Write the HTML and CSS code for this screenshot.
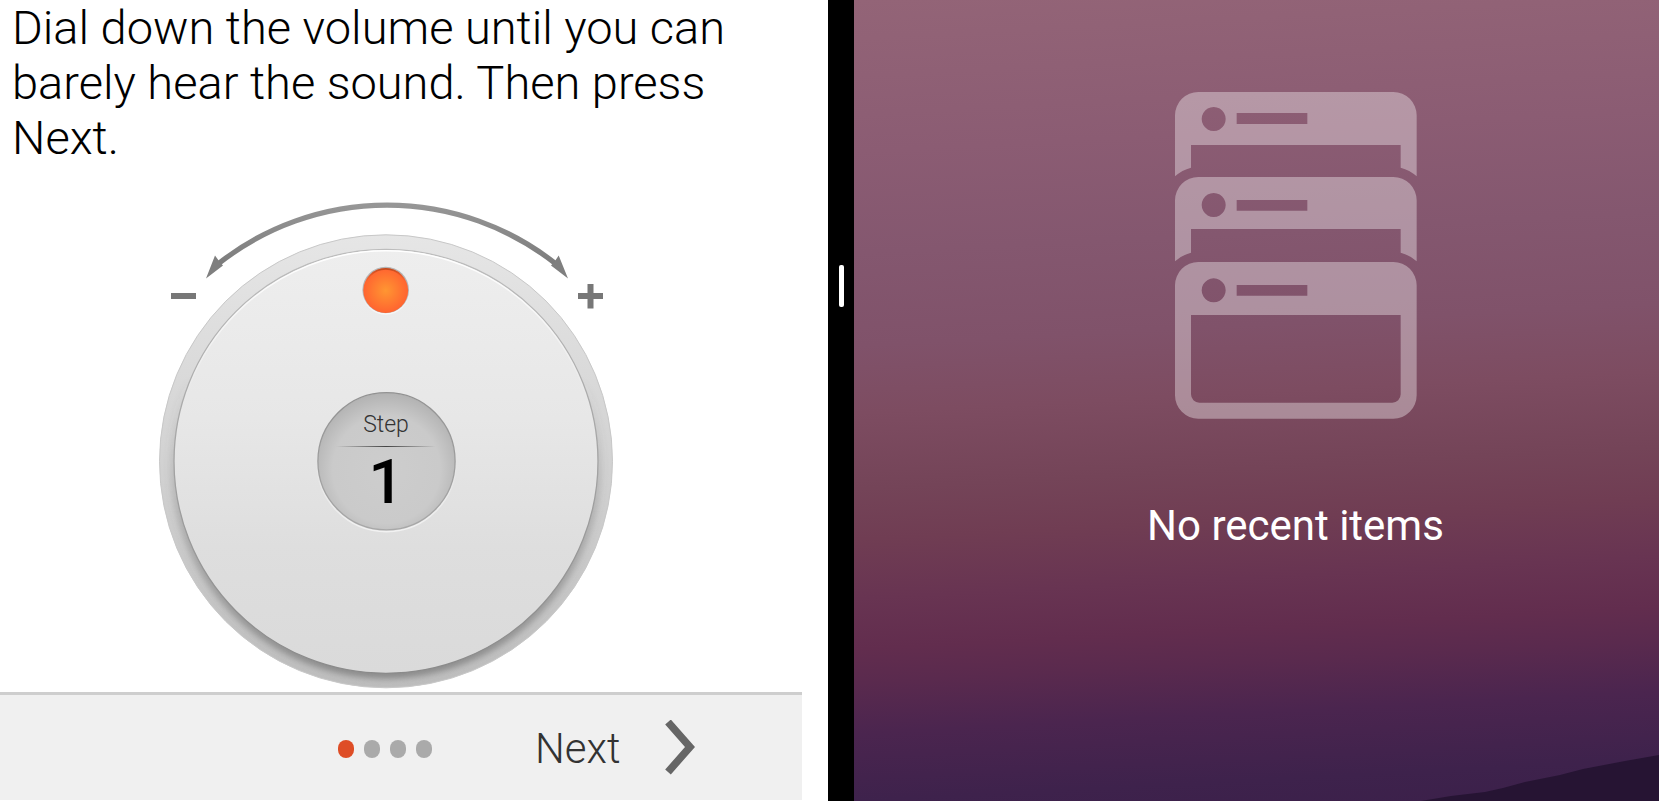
FILE: index.html
```html
<!DOCTYPE html>
<html lang="en">
<head>
<meta charset="utf-8">
<meta name="viewport" content="width=device-width, initial-scale=1">
<title>Hearing setup</title>
<link rel="stylesheet" href="styles.css">
</head>
<body>
<div class="split">
  <main class="setup">
    <p class="instructions">Dial down the volume until you can barely hear the sound. Then press Next.</p>
    <div class="stage">
      <div class="dial">
        <svg class="dial-art" viewBox="150 192 472 500" aria-hidden="true">
          <defs>
            <linearGradient id="rim" x1="0" y1="0" x2="0" y2="1">
              <stop offset="0" stop-color="#e6e6e6"/>
              <stop offset="0.5" stop-color="#d2d2d2"/>
              <stop offset="1" stop-color="#bdbdbd"/>
            </linearGradient>
            <linearGradient id="face" x1="0" y1="0" x2="0" y2="1">
              <stop offset="0" stop-color="#eeeeee"/>
              <stop offset="0.4" stop-color="#e7e7e7"/>
              <stop offset="0.7" stop-color="#dedede"/>
              <stop offset="1" stop-color="#dadada"/>
            </linearGradient>
            <linearGradient id="faceEdge" x1="0" y1="0" x2="0" y2="1">
              <stop offset="0" stop-color="#bdbdbd"/>
              <stop offset="1" stop-color="#8a8a8a"/>
            </linearGradient>
            <linearGradient id="shade" x1="0" y1="0" x2="0" y2="1">
              <stop offset="0.3" stop-color="#666" stop-opacity="0"/>
              <stop offset="1" stop-color="#666" stop-opacity="0.6"/>
            </linearGradient>
            <linearGradient id="shine" x1="0" y1="0" x2="0" y2="1">
              <stop offset="0" stop-color="#fff"/>
              <stop offset="0.35" stop-color="#fff" stop-opacity="0"/>
            </linearGradient>
            <linearGradient id="lip" x1="0" y1="0" x2="0" y2="1">
              <stop offset="0.5" stop-color="#fff" stop-opacity="0"/>
              <stop offset="1" stop-color="#fff" stop-opacity="0.6"/>
            </linearGradient>
            <linearGradient id="wellEdge" x1="0" y1="0" x2="0" y2="1">
              <stop offset="0" stop-color="#929292"/>
              <stop offset="1" stop-color="#a8a8a8"/>
            </linearGradient>
            <radialGradient id="well" cx="0.5" cy="0.56" r="0.56">
              <stop offset="0" stop-color="#cdcdcd"/>
              <stop offset="0.7" stop-color="#cacaca"/>
              <stop offset="1" stop-color="#b2b2b2"/>
            </radialGradient>
            <radialGradient id="lamp">
              <stop offset="0" stop-color="#ff9632"/>
              <stop offset="1" stop-color="#ff6430"/>
            </radialGradient>
            <linearGradient id="lampShade" x1="0" y1="0" x2="0" y2="1">
              <stop offset="0" stop-color="#a84018" stop-opacity="0.7"/>
              <stop offset="0.3" stop-color="#d04a1a" stop-opacity="0"/>
            </linearGradient>
            <linearGradient id="arrow" x1="0" y1="0" x2="0" y2="1">
              <stop offset="0" stop-color="#969696"/>
              <stop offset="1" stop-color="#7c7c7c"/>
            </linearGradient>
            <filter id="soft" x="-10%" y="-10%" width="120%" height="120%"><feGaussianBlur stdDeviation="3"/></filter>
            <clipPath id="rimClip"><circle cx="386" cy="461.300" r="227"/></clipPath>
          </defs>
          <path d="M218 264A272 272 0 0 1 556 264" fill="none" stroke="url(#arrow)" stroke-width="5.200"/>
          <path d="M206 278.500L215 255.500L219 261L223 265.500Z M568 278.500L558.700 255.500L555 261L551 265.500Z" fill="#7f7f7f"/>
          <path d="M171 293h25v6h-25z M578 293h9.500v-9h6v9h9.500v6h-9.500v9.500h-6v-9.500h-9.500z" fill="#777"/>
          <circle cx="386" cy="461.300" r="226.500" fill="url(#rim)" stroke="#c8c8c8" stroke-width="1"/>
          <circle cx="386" cy="462.500" r="211" fill="none" stroke="url(#shade)" stroke-width="10" filter="url(#soft)" clip-path="url(#rimClip)"/>
          <circle cx="386" cy="461.300" r="212" fill="url(#face)" stroke="url(#faceEdge)" stroke-width="1.300"/>
          <circle cx="386" cy="461.500" r="210.700" fill="none" stroke="url(#shine)" stroke-width="1.500"/>
          <circle cx="385.700" cy="290" r="23.300" fill="#b4b4b4"/>
          <circle cx="385.700" cy="291" r="23" fill="none" stroke="url(#lip)" stroke-width="1.500"/>
          <circle cx="385.700" cy="290.500" r="22.400" fill="url(#lamp)"/>
          <circle cx="385.700" cy="290.500" r="21.600" fill="none" stroke="url(#lampShade)" stroke-width="1.600"/>
          <circle cx="386.500" cy="462" r="69.600" fill="none" stroke="url(#lip)" stroke-width="1.600"/>
          <circle cx="386.500" cy="461.300" r="68.600" fill="url(#well)" stroke="url(#wellEdge)" stroke-width="1.300"/>
        </svg>
        <div class="readout">
          <span class="readout-label">Step</span>
          <span class="readout-rule"></span>
          <span class="readout-value">1</span>
        </div>
      </div>
    </div>
    <footer class="wizard-bar">
      <ol class="pager" aria-label="Step 1 of 4">
        <li class="dot dot-current"></li>
        <li class="dot"></li>
        <li class="dot"></li>
        <li class="dot"></li>
      </ol>
      <button class="next" type="button">
        <span class="next-label">Next</span>
        <svg class="chevron" viewBox="0 0 30 56" aria-hidden="true"><path d="M3 2L25 27L3 52" fill="none" stroke="#666" stroke-width="7.500"/></svg>
      </button>
    </footer>
  </main>
  <div class="divider" role="separator" aria-orientation="vertical"><span class="grip"></span></div>
  <section class="recents">
    <svg class="recents-icon" viewBox="44 36 726 981" aria-hidden="true">
      <g fill="#fff" fill-opacity="0.36" fill-rule="evenodd">
        <path d="M44 289V106A70 70 0 0 1 114 36H699A70 70 0 0 1 769 106V289Q748 270 721 263V195H92V263Q65 270 44 289Z M160 81a36 36 0 1 0 .1 0Z M229 99H441V132H229Z"/>
        <path d="M44 544V361A70 70 0 0 1 114 291H699A70 70 0 0 1 769 361V544Q748 525 721 518V447H92V518Q65 525 44 544Z M160 339a36 36 0 1 0 .1 0Z M229 360H441V392H229Z"/>
        <path d="M114 546H699A70 70 0 0 1 769 616V946A70 70 0 0 1 699 1016H114A70 70 0 0 1 44 946V616A70 70 0 0 1 114 546Z M92 705V943A25 25 0 0 0 117 968H696A25 25 0 0 0 721 943V705Z M160 595a36 36 0 1 0 .1 0Z M229 615H441V647H229Z"/>
      </g>
    </svg>
    <p class="recents-text">No recent items</p>
    <svg class="ridge" viewBox="0 0 238 46" aria-hidden="true"><path d="M0 46L30 41L64 37L82 33L104 27L139 20L162 14L204 6L238 0V46Z" fill="#261433"/></svg>
  </section>
</div>
</body>
</html>
```
FILE: styles.css
```css
* {
  box-sizing: border-box;
}

body {
  margin: 0;
  font-family: Roboto, "Liberation Sans", sans-serif;
  background: #fff;
}

.split {
  display: grid;
  grid-template-columns: 828fr 26px 805fr;
  min-height: 100vh;
}

.setup {
  display: flex;
  flex-direction: column;
  padding-bottom: 1px;
  background: #fff;
}

.instructions {
  margin: 0 56px 0 0;
  padding: 0 12px;
  font-size: 47px;
  font-weight: 300;
  line-height: 55px;
  color: #000;
}

.stage {
  flex: 1;
  display: flex;
  justify-content: center;
  align-items: flex-end;
  margin-right: 56px;
}

.dial {
  position: relative;
  width: 472px;
}

.dial-art {
  display: block;
  width: 100%;
}

.readout {
  position: absolute;
  top: 200px;
  left: 167px;
  width: 138px;
  height: 138px;
  padding-top: 19px;
  display: flex;
  flex-direction: column;
  align-items: center;
}

.readout-label {
  font-size: 23px;
  font-weight: 300;
  line-height: 28px;
  color: #333;
}

.readout-rule {
  width: 100px;
  height: 1px;
  margin: 7px 0 3px;
  background: linear-gradient(90deg, transparent, #444, transparent);
}

.readout-value {
  font-size: 62px;
  font-weight: 500;
  line-height: 64px;
  color: #000;
}

.wizard-bar {
  display: grid;
  grid-template-columns: 1fr auto 1fr;
  align-items: center;
  height: 108px;
  margin-right: 26px;
  padding-right: 32px;
  border-top: 3px solid #cecece;
  background: #f0f0f0;
}

.pager {
  grid-column: 2;
  display: flex;
  gap: 10px;
  margin: 2px 0 0;
  padding: 0;
  list-style: none;
}

.dot {
  width: 16px;
  height: 18px;
  border-radius: 8px;
  background: #aaa;
}

.dot-current {
  background: #de4d26;
}

.next {
  justify-self: start;
  display: flex;
  align-items: center;
  gap: 44px;
  margin-left: 103px;
  padding: 0;
  border: 0;
  background: none;
  font: 300 42px/50px Roboto, "Liberation Sans", sans-serif;
  color: #333;
  cursor: pointer;
}

.next-label {
  padding-top: 3px;
}

.chevron {
  width: 30px;
  height: 56px;
}

.divider {
  display: flex;
  justify-content: center;
  padding-top: 265px;
  background: #000;
}

.grip {
  width: 5px;
  height: 42px;
  border-radius: 2px;
  background: #fff;
}

.recents {
  position: relative;
  display: flex;
  flex-direction: column;
  align-items: center;
  padding: 92px 0 0 78px;
  background: linear-gradient(177deg, #936477 0%, #8b5c73 18%, #84576f 30%, #80526a 41%, #7d4c61 49%, #744458 58%, #703d53 64%, #683452 71%, #622d4e 77%, #5a2a4e 81%, #4b254f 87%, #3e224c 95%, #3b204a 100%);
}

.recents-icon {
  width: 242px;
  height: 327px;
}

.recents-text {
  margin: 82px 0 0;
  font-size: 42px;
  line-height: 50px;
  color: #fff;
}

.ridge {
  position: absolute;
  right: 0;
  bottom: 0;
  width: 238px;
}
```
